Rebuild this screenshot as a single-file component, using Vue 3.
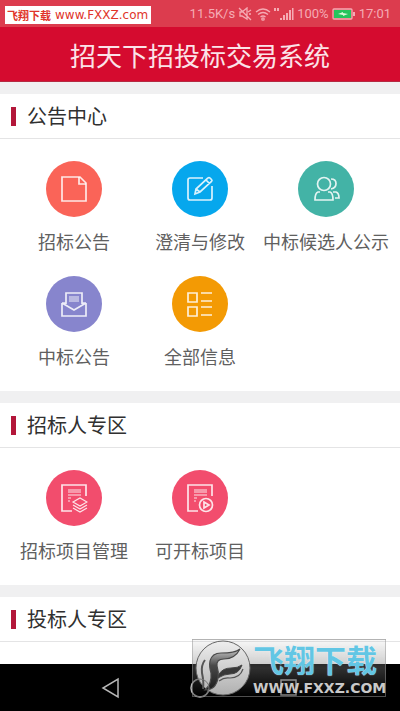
<script setup>
const sections = [
  {
    title: '公告中心',
    items: [
      { label: '招标公告', icon: 'file', tone: 'coral' },
      { label: '澄清与修改', icon: 'edit', tone: 'blue' },
      { label: '中标候选人公示', icon: 'people', tone: 'teal' },
      { label: '中标公告', icon: 'mail', tone: 'violet' },
      { label: '全部信息', icon: 'list', tone: 'orange' },
    ],
  },
  {
    title: '招标人专区',
    items: [
      { label: '招标项目管理', icon: 'layers', tone: 'pink' },
      { label: '可开标项目', icon: 'play', tone: 'pink' },
    ],
  },
  { title: '投标人专区', items: [] },
]
</script>

<template>
  <div class="page">
    <div class="status">
      <span>11.5K/s</span>
      <svg class="mute" width="14" height="14" viewBox="0 0 14 14">
        <path d="M2 5h2l5-4v11L4 9H2zM1 1l12 12M10 5l3-2M11 7h2" />
      </svg>
      <svg class="wifi" width="16" height="14" viewBox="0 0 16 14">
        <path d="M1 5q7-6 14 0M3 7.500q5-4 10 0M5.500 10q2.500-2 5 0" />
        <circle cx="8" cy="12" r="1.200" />
      </svg>
      <svg class="signal" width="20" height="14" viewBox="0 0 20 14">
        <path class="fill" d="M0 1h2v3H0zM3 1h2v3H3zM6 11h2v2H6zM9 8h2v5H9zM12 6h2v7h-2zM15 3h2v10h-2zM18 1h1.500v12H18z" />
      </svg>
      <span>100%</span>
      <svg class="battery" width="24" height="12" viewBox="0 0 24 12">
        <rect x="1" y="1" width="19" height="10" rx="1" />
        <rect class="charge" x="2" y="2" width="17" height="8" />
        <path class="cap" d="M21 4h2v4h-2z" />
        <path class="bolt" d="M6 6l5-2v1l5 1-5 2V7z" />
      </svg>
      <span class="clock">17:01</span>
      <div class="source"><b>飞翔下载</b><span>www.FXXZ.com</span></div>
    </div>

    <header class="bar"><h1>招天下招投标交易系统</h1></header>

    <main class="content">
      <section v-for="s in sections" :key="s.title" class="section">
        <h2>{{ s.title }}</h2>
        <div v-if="s.items.length" class="grid">
          <button v-for="i in s.items" :key="i.label" type="button" class="item">
            <span class="disc" :class="i.tone">
              <svg width="28" height="30" viewBox="0 0 28 30">
                <g v-if="i.icon === 'file'">
                  <path d="M2 3h18l6 6v18H2z" />
                  <path d="M19 3v7h7" />
                </g>
                <g v-else-if="i.icon === 'edit'">
                  <path d="M17 4H4q-2 0-2 2v18q0 2 2 2h20q2 0 2-2V12" />
                  <path d="M9 20l1-5L22 4q1-1 2 0l1.500 1.500q1 1 0 2L14 18zM10 15l4 3M20 6l3.500 3.500" />
                </g>
                <g v-else-if="i.icon === 'people'">
                  <circle cx="12" cy="10" r="6.500" />
                  <path d="M8 18H6q-3 1-3 8h18q0-7-3-8h-2M19 5q5 0 5 4.500T19 15M21 18h3q3 1 3 6h-4" />
                </g>
                <g v-else-if="i.icon === 'mail'">
                  <path d="M6 15V4h16v11M2 14v13h24V14M2 14h4M22 14h4M2 14l12 7 12-7" />
                  <path class="fine" d="M9 8h10M9 10h10M9 12h10" />
                </g>
                <g v-else-if="i.icon === 'list'">
                  <path d="M2 4h9v9H2zM2 18h9v9H2zM15 4h11M15 12h11M15 18h11M15 26h11" />
                </g>
                <g v-else>
                  <path d="M12 28H2V2h24v11" />
                  <path class="fine" d="M8 7h13M8 9h13M8 12h13M8 15h3M8 18h2" />
                  <path v-if="i.icon === 'layers'" class="fine" d="M13 19l7-4 7 4-7 4zM13 22l7 4 7-4M13 25l7 4 7-4" />
                  <template v-else>
                    <circle cx="20" cy="22" r="6.500" />
                    <path d="M18 19v6l5-3z" />
                  </template>
                </g>
              </svg>
            </span>
            <span class="label">{{ i.label }}</span>
          </button>
        </div>
      </section>
    </main>

    <nav class="nav">
      <button type="button" aria-label="返回">
        <svg width="22" height="22" viewBox="0 0 22 22"><path d="M18 2v18L3 11z" /></svg>
      </button>
      <button type="button" aria-label="主页">
        <svg width="22" height="22" viewBox="0 0 22 22"><circle cx="11" cy="11" r="9" /></svg>
      </button>
      <button type="button" aria-label="最近">
        <svg width="22" height="22" viewBox="0 0 22 22"><rect x="3" y="3" width="15" height="15" /></svg>
      </button>
    </nav>

    <div class="mark">
      <svg width="58" height="57" viewBox="0 0 58 57">
        <defs>
          <linearGradient id="silver" x1="0" y1="0" x2="0" y2="1">
            <stop offset="0" stop-color="#eeeeee" />
            <stop offset="1" stop-color="#b0b0b0" />
          </linearGradient>
          <linearGradient id="ink" x1="0" y1="1" x2="0" y2="0">
            <stop offset="0" stop-color="#1c1c1c" />
            <stop offset="0.600" stop-color="#4a4a4a" />
            <stop offset="1" stop-color="#c8c8c8" />
          </linearGradient>
        </defs>
        <circle cx="30" cy="28" r="27" fill="url(#silver)" stroke="#666666" />
        <path d="M47 9C42 13 35 13 28 13q-9 0-11 8-1 5 1 12 1 11-6 17 11 0 13-12 1-6-1-12-1-7 7-7 11 0 16-10z" fill="url(#ink)" stroke="#4a4a4a" stroke-width="1.200" />
        <path d="M12 20q-4 5-3 13 2 9 1 16" fill="none" stroke="#555555" stroke-width="2" />
        <path d="M49 25q-4 3-11 3-8 0-12 6l-1 4q6-4 12-4 9 0 12-9z" fill="#383838" stroke="#444444" />
        <path d="M50 29q-3 9-13 9-6-1-11 3" fill="none" stroke="#555555" stroke-width="1.200" />
        <circle cx="7" cy="48" r="9" fill="none" stroke="#777777" />
      </svg>
      <div class="mark-text"><strong>飞翔下载</strong><span>WWW.FXXZ.COM</span></div>
    </div>
  </div>
</template>

<style>
body { margin: 0; background: #fff; }
</style>

<style scoped>
.page {
  position: relative;
  display: flex;
  flex-direction: column;
  min-height: 100vh;
  font-family: "Noto Sans CJK SC", sans-serif;
  background: #fff;
}
.status {
  position: relative;
  display: flex;
  align-items: center;
  justify-content: flex-end;
  gap: 3px;
  height: 27px;
  padding-right: 9px;
  background: #dc3c4e;
  color: #f5abb4;
  font: 13px/27px Roboto, sans-serif;
}
.status svg { fill: none; stroke: #f5abb4; stroke-width: 1.3; }
.status svg .fill { fill: #f5abb4; stroke: none; }
.status svg .charge { fill: #25c45c; stroke: none; }
.status svg .cap { fill: #f5abb4; stroke: none; }
.status svg .bolt { fill: #d8f8d8; stroke: none; }
.source {
  position: absolute;
  left: 5px;
  top: 6px;
  display: flex;
  align-items: center;
  gap: 4px;
  box-sizing: border-box;
  height: 18px;
  padding: 0 3px 0 2px;
  background: #fff;
  color: #e0342a;
  font: 12px/18px "DejaVu Sans", sans-serif;
}
.source b { font: bold 11px/18px "Noto Sans CJK SC", sans-serif; }
.bar {
  display: flex;
  align-items: center;
  justify-content: center;
  height: 55px;
  background: #d50b2f;
  box-shadow: inset 0 -1px #b52a42;
}
h1 {
  margin: 0;
  color: #fbe3e8;
  font-size: 26px;
  font-weight: 400;
  line-height: 40px;
}
.content { flex: 1; }
.section { border-top: 12px solid #f0f0f1; }
h2 {
  display: flex;
  align-items: center;
  gap: 11px;
  margin: 0;
  padding-left: 11px;
  height: 44px;
  border-bottom: 1px solid #e4e4e5;
  color: #303030;
  font-size: 20px;
  font-weight: 400;
  line-height: 44px;
}
h2::before {
  content: "";
  width: 5px;
  height: 19px;
  background: #b3173a;
}
.grid {
  display: grid;
  grid-template-columns: repeat(3, 1fr);
  gap: 22px 0;
  padding: 22px 11px;
}
.item {
  display: flex;
  flex-direction: column;
  align-items: center;
  gap: 11px;
  padding: 0;
  border: 0;
  background: none;
  color: #606060;
  font: 18px/26px "Noto Sans CJK SC", sans-serif;
  white-space: nowrap;
}
.disc {
  display: flex;
  align-items: center;
  justify-content: center;
  width: 56px;
  height: 56px;
  border-radius: 50%;
}
.disc svg { fill: none; stroke: #fff; stroke-width: 1.7; stroke-opacity: 0.85; }
.disc .fine { stroke-width: 1.2; }
.coral { background: #fa6458; }
.blue { background: #06a7ed; }
.teal { background: #43b3a6; }
.violet { background: #8785cd; }
.orange { background: #f39a04; }
.pink { background: #f24d6d; }
.nav {
  display: flex;
  height: 47px;
  padding: 0 66px;
  background: #000;
}
.nav button {
  display: flex;
  flex: 1;
  align-items: center;
  justify-content: center;
  padding: 0;
  border: 0;
  background: none;
}
.nav svg { fill: none; stroke: #b8b8b8; stroke-width: 1.5; }
.mark {
  position: absolute;
  right: 14px;
  bottom: 14px;
  display: flex;
  gap: 2px;
  box-sizing: border-box;
  width: 194px;
  height: 58px;
  border: 1px solid rgba(150, 150, 150, 0.5);
  border-top-color: transparent;
  background: linear-gradient(rgba(120, 120, 120, 0.05), rgba(120, 120, 120, 0.4) 50%, rgba(0, 0, 0, 0.3));
}
.mark svg { flex: none; }
.mark-text {
  display: flex;
  flex-direction: column;
  gap: 3px;
}
.mark strong {
  color: #62c6e4;
  font-size: 31px;
  font-weight: 700;
  line-height: 38px;
  text-shadow: 0 0 1px #fff;
}
.mark span {
  color: #c9c9c9;
  font: bold 14px/14px "DejaVu Sans", sans-serif;
}
</style>
